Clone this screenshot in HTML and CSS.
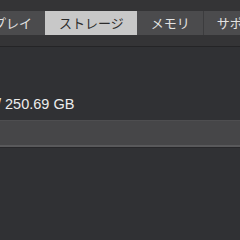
FILE: index.html
```html
<!DOCTYPE html>
<html lang="ja">
<head>
    <meta charset="UTF-8">
    <meta name="viewport" content="width=device-width, initial-scale=1.0">
    <title>ストレージ</title>
    <link rel="stylesheet" href="styles.css">
</head>
<body>
    <div class="toolbar">
        <div class="segmented">
            <div class="tab">ディスプレイ</div>
            <div class="tab selected">ストレージ</div>
            <div class="tab">メモリ</div>
            <div class="tab">サポート</div>
            <div class="tab">サービス</div>
        </div>
    </div>

    <div class="content">
        <div class="info">/ 250.69 GB</div>
        <div class="bar"></div>
    </div>
</body>
</html>
```

FILE: styles.css
```css
html, body {
    margin: 0;
    padding: 0;
    height: 100%;
    overflow: hidden;
}
body {
    font-family: "Liberation Sans", "Noto Sans CJK JP", sans-serif;
    background-color: #303134;
    color: #e6e6e6;
}
.toolbar {
    background: #343436;
    padding: 11px 0 11px 0;
    border-bottom: 1px solid #242426;
}
.segmented {
    display: flex;
    margin-left: -59px;
    height: 24px;
    white-space: nowrap;
}
.tab {
    font-family: "Noto Sans CJK JP", sans-serif;
    font-size: 13px;
    line-height: 24px;
    padding: 0 13px;
    background: #4b4b4d;
    color: #e2e2e2;
    border-left: 1px solid #3c3c3e;
    flex-shrink: 0;
}
.tab.selected {
    background: #c8c8c8;
    color: #2c2c2c;
    border-left-color: #c8c8c8;
}
.tab.selected + .tab {
    border-left-color: #4b4b4d;
}
.content {
    padding-top: 48px;
}
.info {
    font-size: 14.5px;
    line-height: 18px;
    margin-left: -3px;
    color: #ececec;
}
.bar {
    margin-top: 7px;
    height: 24px;
    background: #464648;
    border-top: 1px solid #4e4e50;
    border-bottom: 2px solid #59595b;
    box-shadow: 0 1px 0 #27272a;
}
```
